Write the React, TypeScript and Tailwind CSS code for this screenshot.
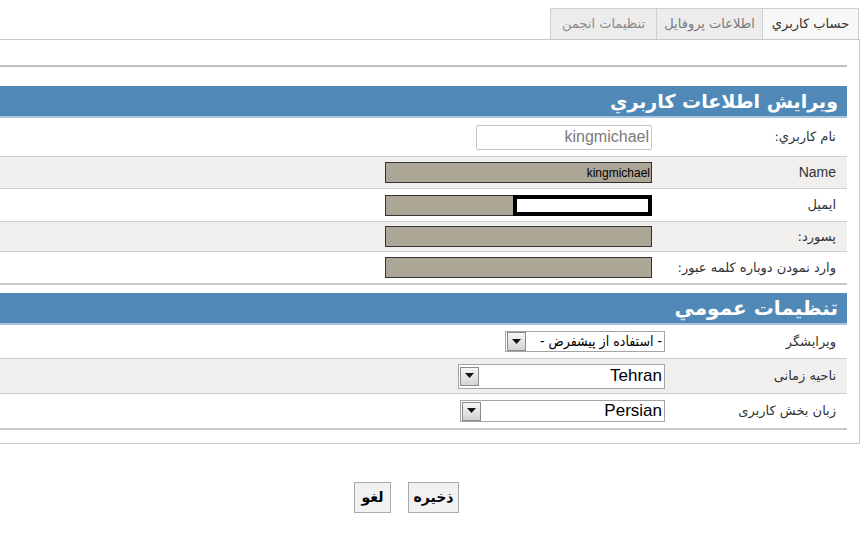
import React from "react";

const font = "font-['DejaVu_Sans',sans-serif]";

function Arrow() {
  return (
    <div className="w-[19px] h-[19px] border border-[#8a8a8a] bg-gradient-to-b from-[#f6f6f6] to-[#d4d4d4] flex items-center justify-center">
      <svg width="9" height="6" viewBox="0 0 9 6">
        <path d="M0 0 L9 0 L4.5 5 Z" fill="#111" />
      </svg>
    </div>
  );
}

function Row({
  gray,
  h,
  label,
  labelCls = "text-[13px]",
  children,
  last,
}: {
  gray?: boolean;
  h: string;
  label: string;
  labelCls?: string;
  children: React.ReactNode;
  last?: boolean;
}) {
  return (
    <div
      className={`flex items-center ${h} ${gray ? "bg-[#f0efed]" : "bg-white"} ${
        last ? "" : "border-b border-[#cfcfcf]"
      }`}
    >
      <div className={`w-[182px] shrink-0 pr-[11px] text-right text-[#333] ${labelCls}`}>{label}</div>
      <div className="flex-1 flex">{children}</div>
    </div>
  );
}

function Tan({ children }: { children?: React.ReactNode }) {
  return (
    <div className="mr-[13px] h-[21px] w-[267px] bg-[#aca696] border border-[#333] flex items-center text-[12px] text-black pr-[1px] font-['Liberation_Sans',sans-serif]">
      {children}
    </div>
  );
}

function Select({ w, text, cls }: { w: string; text: string; cls: string }) {
  return (
    <div className={`${w} flex items-center justify-between bg-white border border-[#a5a5a5] pr-[2px] pl-[1px]`}>
      <span className={cls}>{text}</span>
      <Arrow />
    </div>
  );
}

const cond = "text-[13px] text-[#333]";

export default function App() {
  return (
    <div dir="rtl" className={`w-[867px] h-[548px] bg-white overflow-hidden ${font}`}>
      {/* tabs */}
      <div className="flex pt-[8px] pr-[8px]">
        <div className="w-[97px] h-[31px] border border-b-0 border-[#cfcfcf] bg-[#f7f7f7] flex items-center justify-center text-[13px] text-[#333]">
          حساب كاربري
        </div>
        <div className="w-[106px] h-[31px] border border-b-0 border-r-0 border-[#cfcfcf] bg-[#ececec] flex items-center justify-center text-[13px] text-[#7a7a7a]">
          اطلاعات پروفايل
        </div>
        <div className="w-[106px] h-[31px] border border-b-0 border-r-0 border-[#cfcfcf] bg-[#ececec] flex items-center justify-center text-[13px] text-[#8a8a8a]">
          تنظيمات انجمن
        </div>
      </div>

      {/* outer box */}
      <div className="w-[860px] mr-[7px] h-[405px] border-t border-r border-b border-[#c8c8c8] pt-[25px]">
        <div className="w-[847px] mr-[12px] border-t-2 border-[#c0c0c0] pt-[19px]">
          {/* header 1 */}
          <div className="h-[32px] bg-[#5088b8] border-b-2 border-[#a9c4dd] flex items-center pr-[9px] text-white text-[19px] font-bold">
            ويرايش اطلاعات كاربري
          </div>
          <Row h="h-[39px]" label="نام كاربري:">
            <div className="mr-[13px] h-[25px] w-[176px] border border-[#c4c4c4] rounded-[2px] flex items-center pr-[2px] text-[16px] text-[#7a7a7a] font-['Liberation_Sans',sans-serif]">
              kingmichael
            </div>
          </Row>
          <Row gray h="h-[32px]" label="Name" labelCls="font-['Liberation_Sans',sans-serif] text-[14px]">
            <Tan>kingmichael</Tan>
          </Row>
          <Row h="h-[33px]" label="ايميل">
            <Tan>
              <div className="w-[139px] h-[21px] -mr-[2px] -my-[1px] border-[4px] border-black bg-white" />
            </Tan>
          </Row>
          <Row gray h="h-[30px]" label="پسورد:">
            <Tan />
          </Row>
          <Row h="h-[31px]" label="وارد نمودن دوباره كلمه عبور:" last>
            <Tan />
          </Row>
          <div className="border-t-2 border-[#c8c8c8]" />

          {/* header 2 */}
          <div className="mt-[8px] h-[32px] bg-[#5088b8] border-b-2 border-[#a9c4dd] flex items-center pr-[9px] text-white text-[20px] font-bold">
            تنظيمات عمومي
          </div>
          <Row h="h-[34px]" label="ويرايشگر" labelCls={cond}>
            <Select
              w="w-[160px] h-[21px]"
              text="- استفاده از پيشفرض -"
              cls="text-[14px] text-black font-['DejaVu_Sans_Condensed',sans-serif]"
            />
          </Row>
          <Row gray h="h-[35px]" label="ناحيه زمانى" labelCls={cond}>
            <Select w="w-[207px] h-[25px]" text="Tehran" cls="text-[17px] text-black font-['Liberation_Sans',sans-serif]" />
          </Row>
          <Row h="h-[34px]" label="زبان بخش كاربرى" labelCls={cond} last>
            <Select w="w-[205px] h-[22px]" text="Persian" cls="text-[17px] text-black font-['Liberation_Sans',sans-serif]" />
          </Row>
          <div className="border-t-2 border-[#c8c8c8]" />
        </div>
      </div>

      {/* buttons */}
      <div className="flex gap-[17px] pr-[408px] mt-[38px]">
        <button className="w-[51px] h-[31px] border border-[#aaa] bg-[#f1f1f1] text-[14px] font-bold text-black">
          ذخيره
        </button>
        <button className="w-[37px] h-[31px] border border-[#aaa] bg-[#f1f1f1] text-[14px] font-bold text-black">
          لغو
        </button>
      </div>
    </div>
  );
}
